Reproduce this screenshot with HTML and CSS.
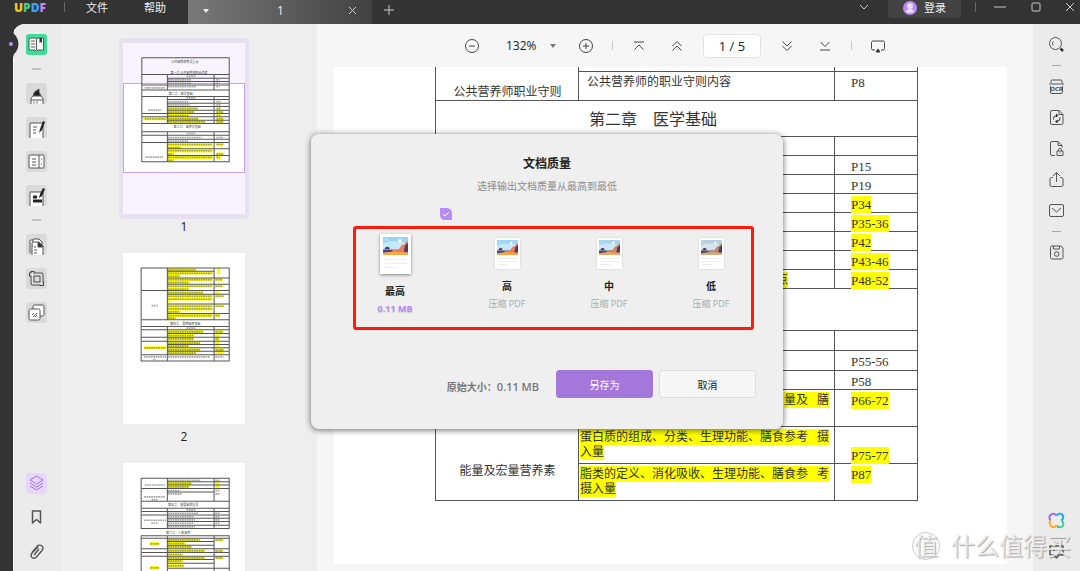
FILE: index.html
```html
<!DOCTYPE html>
<html lang="zh-CN">
<head>
<meta charset="utf-8">
<title>UPDF</title>
<link rel="stylesheet" href="styles.css">
</head>
<body>
<svg class="defs" aria-hidden="true">
  <symbol id="scene" viewBox="0 0 75 54" preserveAspectRatio="none">
    <rect width="75" height="54" fill="#9bd6f8"/>
    <path d="M0 20 Q20 6 75 18V54H0z" fill="#c4e8fb"/>
    <circle cx="51" cy="11" r="5" fill="#fff6dc"/><circle cx="10" cy="8" r="2" fill="#fff"/>
    <path d="M0 38h75v9H0z" fill="#4d3f78"/>
    <path d="M22 47l8-8h16l10-14 8-3 6-8 5-1v34z" fill="#ee7a5a"/>
    <path d="M62 44l4-18 9-9v28z" fill="#51386f"/>
    <path d="M5 37q0-8 8-8t7 8z" fill="#51386f"/>
    <path d="M0 48q35-7 75 0v6H0z" fill="#fba544"/>
  </symbol>
</svg>
<div class="app">
  <header class="titlebar">
    <div class="logo"><span class="u">U</span><span class="p">P</span><span class="d">D</span><span class="f">F</span></div>
    <span class="vline"></span>
    <nav class="menu"><button>文件</button><button>帮助</button></nav>
    <div class="tab">
      <span class="caret light"></span><span class="tab-name">1</span>
      <button class="icon" aria-label="关闭标签"><svg width="9" height="9" viewBox="0 0 9 9"><path d="M1 1l7 7M8 1l-7 7"/></svg></button>
    </div>
    <button class="icon add" aria-label="新标签"><svg width="10" height="10" viewBox="0 0 10 10"><path d="M5 0v10M0 5h10"/></svg></button>
    <div class="window">
      <button class="icon" aria-label="标签列表"><svg width="10" height="8" viewBox="0 0 10 8"><path d="M1 2l4 4 4-4"/></svg></button>
      <button class="login"><svg width="14" height="14" viewBox="0 0 14 14"><circle cx="7" cy="7" r="7" fill="#b98af5"/><circle cx="7" cy="5" r="3" fill="#eadcff"/><path d="M3 11q0-3 4-3t4 3q-4 2-8 0z" fill="#eadcff"/></svg>登录</button>
      <span class="vline"></span>
      <button class="icon" aria-label="最小化"><svg width="12" height="10" viewBox="0 0 12 10"><path d="M0 5h12"/></svg></button>
      <button class="icon" aria-label="最大化"><svg width="10" height="10" viewBox="0 0 10 10"><rect x="1" y="1" width="8" height="8" rx="1"/></svg></button>
      <button class="icon" aria-label="关闭"><svg width="10" height="10" viewBox="0 0 10 10"><path d="M1 1l8 8M9 1l-8 8"/></svg></button>
    </div>
  </header>

  <div class="body">
    <aside class="rail left">
      <svg class="notch" width="14" height="30" viewBox="0 0 14 30"><path d="M0 0h5Q5 5 8 7Q13 15 8 23Q5 25 5 30H0z" fill="#333"/><circle cx="3" cy="15" r="2" fill="#c08cf8"/></svg>
      <button class="tool active" aria-label="阅读器"><svg viewBox="0 0 21 21"><path d="M3 4h6q1.500 0 1.500 1.500Q10.500 4 12 4h5.500v12H12l-1.500 1.200L9 16H3z" fill="#fff"/><path d="M10.500 6v10M5 7h4M5 10h4M5 13h4"/><path d="M13.500 4h2.500v5l-1.250-1L13.500 9z" fill="#333" stroke="none"/></svg></button>
      <hr>
      <button class="tool" aria-label="注释"><svg viewBox="0 0 21 21"><path d="M7 13l1.500-4 4.500-3v3l2 4z" fill="#222"/><path d="M5 21v-6l2-2h8l2 2v6M5 17h12" fill="#fff"/><path d="M8 18v3M11 18v3" stroke="#888"/></svg></button>
      <button class="tool" aria-label="编辑"><svg viewBox="0 0 21 21"><path d="M4 21V6h13v15" fill="#fff"/><path d="M7 10h4M7 13h3M7 16h3"/><path d="M17 4l-3 8-1 4 3-3 3-8z" fill="#222" stroke="none"/></svg></button>
      <button class="tool" aria-label="页面"><svg viewBox="0 0 21 21"><rect x="3" y="4" width="15" height="13" rx="1" fill="#fff"/><path d="M13 4v13M6 8h4M6 11h4M6 14h4M15 8h1M15 13h1"/></svg></button>
      <button class="tool" aria-label="表单"><svg viewBox="0 0 21 21"><path d="M4 21V7h13v14" fill="#fff"/><path d="M7 12h4M7 16h9" stroke-width="3" stroke="#222"/><path d="M17 3l-3 6-1 4 3-2 3-7z" fill="#222" stroke="none"/></svg></button>
      <hr>
      <button class="tool" aria-label="组织页面"><svg viewBox="0 0 21 21"><path d="M4 19V7q0-1 1-1h2M6 21V9q0-1 1-1h6l4 4v9M7 8V6q0-1 1-1h5l3 3v3" fill="#fff"/><path d="M12 8l5 5h-5z" fill="#222"/><path d="M6 12h1M8 13h2M8 16h3M8 19h3"/></svg></button>
      <button class="tool" aria-label="裁剪"><svg viewBox="0 0 21 21"><path d="M3 6.500h12.500V18M6.500 3v12.500H18" stroke-width="4" stroke="#444"/><path d="M4 6.500h11.500V17M6.500 4v11.500H17" stroke-width="2" stroke="#e4e4e4"/></svg></button>
      <button class="tool" aria-label="转换"><svg viewBox="0 0 21 21"><rect x="7" y="3" width="11" height="11" rx="1.500" fill="#fff"/><rect x="3" y="7" width="11" height="11" rx="1.500" fill="#fff"/><path d="M6 13l2-2M7 15l4-4M9 15l2-2"/></svg></button>
      <button class="tool plain layers" aria-label="图层"><svg viewBox="0 0 21 21"><path d="M10.500 3L17 7l-6.500 4L4 7zM4 10l6.500 4 6.500-4M4 13l6.500 4 6.500-4"/></svg></button>
      <button class="tool plain" aria-label="书签"><svg viewBox="0 0 21 21"><path d="M6.500 4h8v12l-4-3.500-4 3.500z" stroke-width="1.500"/></svg></button>
      <button class="tool plain" aria-label="附件"><svg viewBox="0 0 21 21"><path d="M12 6l-6 6q-2 3 0 4.500t4 0l6-7q2-3 0-4.500t-4-.5l-6 7M8 14l5-6" stroke-width="1.400"/></svg></button>
    </aside>

    <section class="thumbs">
      <figure class="thumb selected">
        <div class="frame"><svg viewBox="40 38 363 514" preserveAspectRatio="none">
          <rect x="40" y="38" width="363" height="514" fill="#f8f3fe"/>
          <rect x="41.500" y="160" width="360" height="267" fill="#fff" stroke="#c8a0f8" stroke-width="3"/>
          <g fill="#ff0"><path d="M172 230h90v10h-90zM172 241h80v9h-80zM172 251h65v9h-65zM100 262h165v8H100zM172 271h113v8H172zM318 230h12v9h-12zM318 241h22v9h-22zM318 251h12v9h-12zM318 262h22v17h-22zM172 338h134v11H172zM172 349h42v8h-42zM172 358h134v9H172zM172 367h20v8h-20zM172 377h134v10H172zM172 387h20v8h-20zM318 338h22v10h-22zM318 367h22v9h-22zM318 377h12v10h-12z"/></g>
          <path class="ink" d="M96 82H356V395H96zM96 133H356M172 144H356M172 154H356M96 164H356M96 179H356M96 199H356M172 208H356M172 219H356M172 229H356M172 240H356M96 250H356M96 260H356M172 270H356M96 280H356M96 305H356M96 315H356M172 327H356M96 337H356M172 356H356M172 376H356M172 133V179M311 133V179M172 199V280M311 199V280M172 305V395M311 305V395"/>
          <path class="dots" d="M174 149h70M174 159h70M174 169h82M105 173h60M174 214h60M174 224h65M174 235h88M174 246h78M174 256h62M174 266h90M174 275h110M116 240h38M105 266h62M229 138h26M229 203h26M229 310h26M174 322h100M174 333h60M174 343h130M174 353h36M174 362h130M174 372h16M174 382h130M174 391h16M107 381h52M318 149h9M318 159h9M318 169h9M318 214h14M318 224h14M318 235h12M318 246h20M318 256h12M318 266h20M318 275h20M318 322h20M318 343h20M318 372h20M318 382h10"/>
          <text x="224" y="98">公共营养师考试重点</text><text x="236" y="130">第一章 公共营养师职业道德</text><text x="212" y="193">第二章　医学基础</text><text x="231" y="295">第三章　营养学基础</text>
        </svg></div><figcaption>1</figcaption>
      </figure>
      <figure class="thumb">
        <div class="frame"><svg viewBox="40 25 363 514" preserveAspectRatio="none">
          <rect x="40" y="25" width="363" height="514" fill="#fff"/>
          <path fill="#ff0" d="M172 71h86v9h-86zM172 81h134v9H172zM172 90h38v8h-38zM172 101h134v8H172zM172 109h66v8h-66zM172 121h134v8H172zM172 129h66v8h-66zM172 140h107v9H172zM172 150h134v18H172zM172 168h8v8h-8zM172 180h134v18H172zM172 198h38v7h-38zM172 208h134v10H172zM172 218h26v7h-26zM319 71h10v18h-10zM315 101h22v8h-22zM315 121h24v8h-24zM315 140h12v9h-12zM315 150h26v9h-26zM315 180h26v8h-26zM315 208h14v9h-14zM172 257h107v9H172zM172 268h80v9h-80zM172 279h80v9h-80zM172 291h98v9h-98zM172 301h65v9h-65zM172 311h98v9h-98zM172 321h86v9h-86zM101 305h68v9h-68zM315 257h25v9h-25zM315 268h12v42h-12zM315 311h26v18h-26z"/>
          <path class="ink" d="M94 70H356V350H94zM172 80H311M172 100H356M172 119H356M96 138H356M172 149H356M172 178H356M172 207H356M96 226H356M96 246H356M96 256H356M172 267H356M96 278H356M96 290H356M172 300H356M172 310H356M172 320H356M96 331H356M172 70V226M311 70V226M172 246V350M311 246V350"/>
          <path class="dots" d="M174 76h82M174 86h130M174 95h34M174 105h130M174 114h60M174 125h130M174 134h60M174 144h104M174 155h130M174 164h130M174 185h130M174 193h130M174 202h34M174 213h130M174 221h22M125 183h18M229 251h26M174 262h104M174 273h76M174 283h76M174 296h95M174 305h60M174 316h95M174 326h82M103 310h64M102 337h66M130 345h8M174 337h124M315 105h20M315 125h22M315 155h24M315 185h24M315 213h12M315 262h22M315 283h10M315 316h24M315 337h24"/>
          <text x="225" y="241">第四章　食物营养基础</text>
        </svg></div><figcaption>2</figcaption>
      </figure>
      <figure class="thumb">
        <div class="frame"><svg viewBox="40 656 363 514" preserveAspectRatio="none">
          <rect x="40" y="656" width="363" height="514" fill="#fff"/>
          <path fill="#ff0" d="M172 713h73v9h-73zM172 723h66v9h-66zM315 713h12v19h-12zM172 883h98v9h-98zM172 893h54v9h-54zM172 904h73v9h-73zM172 916h112v9H172zM172 927h46v8h-46zM172 937h112v9H172zM172 947h46v8h-46zM172 960h49v10h-49zM120 894h28v9h-28zM120 966h28v9h-28zM315 883h25v9h-25zM315 916h25v9h-25zM315 937h25v9h-25z"/>
          <path class="ink" d="M94 702H356V853H94zM172 712H356M172 722H356M96 733H356M172 743H311M96 771H356M96 792H356M96 802H356M96 812H356M172 822H356M172 832H356M172 843H356M172 702V771M311 702V771M172 792V853M311 792V853M94 875H356V1150H94zM96 882H356M172 892H311M172 903H311M96 914H356M96 925H356M96 936H356M172 946H311M172 957H311M172 972H356M172 875V1150M311 875V1150"/>
          <path class="dots" d="M174 708h98M174 718h70M174 728h62M174 739h36M174 749h40M105 722h60M103 758h62M125 767h18M229 797h26M174 807h90M174 817h76M174 827h80M174 837h76M174 848h80M102 828h66M124 837h20M174 887h94M174 898h50M174 908h70M174 920h108M174 931h42M174 941h108M174 951h42M174 965h46M121 899h26M121 971h26M315 708h12M315 739h12M315 749h12M315 807h12M315 817h12M315 827h12M315 837h12M315 887h22M315 920h22M315 941h22"/>
          <text x="219" y="786">第五章　膳食营养指导</text><text x="204" y="868">第六章　人群营养</text>
        </svg></div><figcaption>3</figcaption>
      </figure>
    </section>

    <main class="viewer">
      <div class="toolbar">
        <button class="ti" aria-label="缩小"><svg viewBox="0 0 16 16"><circle cx="8" cy="8" r="6.500"/><path d="M5 8h6"/></svg></button>
        <label class="zoom"><select aria-label="缩放"><option>132%</option></select><span class="caret"></span></label>
        <button class="ti" aria-label="放大"><svg viewBox="0 0 16 16"><circle cx="8" cy="8" r="6.500"/><path d="M5 8h6M8 5v6"/></svg></button>
        <span class="bar"></span>
        <button class="ti" aria-label="首页"><svg viewBox="0 0 16 16"><path d="M3 4h10M3.500 11.500L8 7l4.500 4.500"/></svg></button>
        <button class="ti wide" aria-label="上一页"><svg viewBox="0 0 16 16"><path d="M3.500 8L8 3.500 12.500 8M3.500 12.500L8 8l4.500 4.500"/></svg></button>
        <input class="page-no" aria-label="页码" value="1 / 5">
        <button class="ti" aria-label="下一页"><svg viewBox="0 0 16 16"><path d="M3.500 3.500L8 8l4.500-4.500M3.500 8L8 12.500 12.500 8"/></svg></button>
        <button class="ti wide" aria-label="末页"><svg viewBox="0 0 16 16"><path d="M3.500 4L8 8.500 12.500 4M3 12h10"/></svg></button>
        <span class="bar"></span>
        <button class="ti" aria-label="演示"><svg viewBox="0 0 16 16"><path d="M5 12H3q-1.500 0-1.500-1.500v-6Q1.500 3 3 3h10q1.500 0 1.500 1.500v6Q14.500 12 13 12h-2"/><path d="M8 11l2 3H6z" fill="#222"/></svg></button>
      </div>
      <div class="sheet">
        <table>
          <colgroup><col class="c1"><col class="c2"><col class="c3"></colgroup>
          <tr class="h20"><td rowspan="2" class="topic low">公共营养师职业守则</td><td class="in">职业道德的作用和要素</td><td class="pg">P6</td></tr>
          <tr class="h29"><td class="in">公共营养师的职业守则内容</td><td class="pg">P8</td></tr>
          <tr class="h36"><td colspan="3" class="chapter">第二章　医学基础</td></tr>
          <tr class="h19"><td></td><td></td><td></td></tr>
          <tr class="h19"><td></td><td></td><td class="pg">P15</td></tr>
          <tr class="h19"><td></td><td></td><td class="pg">P19</td></tr>
          <tr class="h19"><td></td><td></td><td class="pg"><mark>P34</mark></td></tr>
          <tr class="h19"><td></td><td></td><td class="pg"><mark>P35-36</mark></td></tr>
          <tr class="h19"><td></td><td></td><td class="pg"><mark>P42</mark></td></tr>
          <tr class="h19"><td></td><td></td><td class="pg"><mark>P43-46</mark></td></tr>
          <tr class="h19"><td></td><td class="tail short-line"><mark>点</mark></td><td class="pg"><mark>P48-52</mark></td></tr>
          <tr class="h42"><td colspan="3"></td></tr>
          <tr class="h20"><td></td><td></td><td></td></tr>
          <tr class="h20"><td></td><td></td><td class="pg">P55-56</td></tr>
          <tr class="h19"><td></td><td></td><td class="pg">P58</td></tr>
          <tr class="h37"><td></td><td class="tail"><mark>量及&nbsp; &nbsp;膳</mark></td><td class="pg"><mark>P66-72</mark></td></tr>
          <tr class="h37"><td rowspan="2" class="topic">能量及宏量营养素</td><td><mark>蛋白质的组成、分类、生理功能、膳食参考&nbsp; &nbsp;摄<br>入量</mark></td><td class="pg low"><mark>P75-77</mark></td></tr>
          <tr class="h37"><td><mark>脂类的定义、消化吸收、生理功能、膳食参&nbsp; &nbsp;考<br>摄入量</mark></td><td class="pg"><mark>P87</mark></td></tr>
        </table>
      </div>
    </main>

    <aside class="rail right">
      <button class="side" aria-label="搜索"><svg viewBox="0 0 17 17"><circle cx="7.500" cy="7.500" r="6"/><path d="M5 5.500q-1 2 0 4"/><path d="M12.500 12.500l2.500 2.500" stroke-width="2.500" stroke="#333"/></svg></button>
      <hr>
      <button class="side" aria-label="OCR"><svg viewBox="0 0 17 17"><path d="M3 5V3q0-1 1-1h9q1 0 1 1v2M1 6h15M2.500 8v6q0 1.500 1.500 1.500h9q1.500 0 1.500-1.500V8"/><text x="8.500" y="13">OCR</text></svg></button>
      <button class="side" aria-label="转换"><svg viewBox="0 0 17 17"><path d="M4 1.500h7l4 4v8.500q0 1.500-1.500 1.500H4Q2.500 15.500 2.500 14V3Q2.500 1.500 4 1.500zM11 1.500v4h4"/><path d="M5.500 10.500q-.5-3.500 3-4M12 8.500q.5 3.500-3 4" stroke="#333"/><path d="M8 4.500l2.500 2L8 8.500zM9.500 10.500l-2.500 2 2.500 2z" fill="#333" stroke="none"/></svg></button>
      <button class="side" aria-label="保护"><svg viewBox="0 0 17 17"><path d="M7 15.500H4Q2.500 15.500 2.500 14V3Q2.500 1.500 4 1.500h6l4 4v2M10 1.500v4h4M9 11h6v4.500H9zM10.500 11V9.500q0-1 1.500-1t1.500 1V11M12 12.500v1"/></svg></button>
      <button class="side" aria-label="分享"><svg viewBox="0 0 17 17"><path d="M5 6.500H3.500Q2 6.500 2 8v6q0 1.500 1.500 1.500h10q1.500 0 1.500-1.500V8q0-1.500-1.500-1.500H12M8.500 11V1.500M5 5l3.500-3.500L12 5"/></svg></button>
      <button class="side" aria-label="邮件"><svg viewBox="0 0 17 17"><rect x="1.500" y="2.500" width="14" height="12" rx="1.500"/><path d="M4 6l4.500 4L13 6"/></svg></button>
      <hr>
      <button class="side" aria-label="保存"><svg viewBox="0 0 17 17"><path d="M4 2h9l2 2v9.500Q15 15 13.500 15H4q-1.500 0-1.500-1.500v-10Q2.500 2 4 2zM5.500 2v3h6V2"/><circle cx="8.750" cy="10" r="2.300"/></svg></button>
      <button class="side last" aria-label="AI 助手"><svg viewBox="0 0 17 17" stroke-width="2"><path d="M2.500 8.500Q0 5 3 2.500 6 .5 8.500 3.500" stroke="#a06cf5"/><path d="M8.500 3.500Q12 0 14.500 3q2 2.500-1 5.500" stroke="#22a8f0"/><path d="M13.500 8.500q3.500 3.500.5 6-3 2-5.500-1" stroke="#35cf96"/><path d="M8.500 13.500q-3 3-5.500.5-2.500-2.500-.5-5.500" stroke="#fcae22"/></svg></button>
      <button class="side" aria-label="反馈"><svg viewBox="0 0 17 17"><path d="M2 3h13v9h-4l-2.500 3L6 12H2zM5 7h2M10 7h2" stroke-width="1.500"/></svg></button>
    </aside>
  </div>

  <div class="overlay">
    <form class="dialog" role="dialog" aria-labelledby="dt">
      <h1 id="dt">文档质量</h1>
      <p class="hint">选择输出文档质量从最高到最低</p>
      <fieldset class="options">
        <label class="opt best"><input type="radio" name="q" checked><span class="pic"><svg class="scene"><use href="#scene"/></svg><i></i><i></i><i class="short"></i></span><b>最高</b><small>0.11 MB</small>
          <svg class="check" width="12" height="12" viewBox="0 0 12 12"><path d="M0 0h7q5 0 5 6v6H5q-5 0-5-6z" fill="#b98af8"/><path d="M3 6l2 2 4-4" fill="none" stroke="#fff"/></svg></label>
        <label class="opt"><input type="radio" name="q"><span class="pic"><svg class="scene"><use href="#scene"/></svg><i></i><i></i><i class="short"></i></span><b>高</b><small>压缩 PDF</small></label>
        <label class="opt medium"><input type="radio" name="q"><span class="pic"><svg class="scene"><use href="#scene"/></svg><i></i><i></i><i class="short"></i></span><b>中</b><small>压缩 PDF</small></label>
        <label class="opt lowest"><input type="radio" name="q"><span class="pic"><svg class="scene"><use href="#scene"/></svg><i></i><i></i><i class="short"></i></span><b>低</b><small>压缩 PDF</small></label>
      </fieldset>
      <div class="actions"><span class="size">原始大小：<span class="num">0.11 MB</span></span><button type="button" class="btn primary">另存为</button><button type="button" class="btn">取消</button></div>
    </form>
  </div>
  <div class="watermark"><span class="seal">值</span><span>什么值得买</span></div>
</div>
</body>
</html>
```
FILE: styles.css
```css
* { box-sizing: border-box; }
body {
  margin: 0;
  background: #333;
  color: #222;
  font: 11px "Open Sans", "Noto Sans CJK SC", sans-serif;
}
button, input, select { font: inherit; color: inherit; border: 0; background: none; padding: 0; margin: 0; }
button { display: inline-flex; align-items: center; justify-content: center; cursor: pointer; }
svg { fill: none; stroke-linejoin: round; display: block; }
hr { border: 0; margin: 0; }
.defs { position: absolute; width: 0; height: 0; }
.app { position: relative; height: 100vh; display: flex; flex-direction: column; overflow: hidden; }

.titlebar { flex: none; height: 24px; display: flex; align-items: flex-start; color: #eee; line-height: 16px; }
.titlebar svg { stroke: #ccc; }
.logo { width: 50px; padding-left: 14px; font: 800 12px/16px "Open Sans", sans-serif; white-space: nowrap; }
.u { color: #fcc419; } .p { color: #38d08c; } .d { color: #3aa2f5; } .f { color: #c084f5; }
.vline { width: 1px; height: 10px; margin-top: 2px; background: #666; }
.logo + .vline { margin-left: 14px; }
.menu { display: flex; gap: 36px; padding: 0 22px 0 21px; }
.menu button { height: 16px; }
.tab { width: 184px; height: 24px; padding: 0 15px 3px; display: flex; align-items: center; justify-content: space-between; background: linear-gradient(90deg, #797979, #424242); }
.tab-name { font-size: 12px; padding-left: 4px; }
.caret { border: 3px solid transparent; border-top: 4px solid #777; border-bottom: 0; }
.caret.light { border-top-color: #eee; }
.add { margin: 5px 0 0 12px; }
.window { margin-left: auto; display: flex; align-items: flex-start; padding-right: 5px; }
.window > .icon { height: 14px; }
.login { height: 18px; width: 73px; gap: 7px; margin: 0 14px 0 19px; padding-bottom: 3px; background: #434343; border-radius: 0 0 3px 3px; }
.login svg { stroke: none; }
.window .vline + .icon { margin: 0 25px 0 18px; }
.window .icon:last-child { margin-left: 24px; }

.body { flex: 1; min-height: 0; margin-left: 13px; display: flex; border-radius: 12px 12px 0 0; overflow: clip; overflow-clip-margin: 14px; background: #eee; }
.rail { flex: none; display: flex; flex-direction: column; align-items: center; background: #ebebeb; }
.rail hr { width: 9px; height: 2px; background: #c2c2c2; flex: none; }
.left { position: relative; width: 47px; padding: 10px 0 9px; gap: 13px; border-left: 1px solid #fff; border-right: 1px solid #e6e6e6; border-top-left-radius: 12px; }
.notch { position: absolute; left: -6px; top: 5px; }
.tool { flex: none; width: 21px; height: 21px; border-radius: 3px; background: #dadada; overflow: hidden; }
.tool svg { width: 21px; height: 21px; stroke: #555; }
.tool.active { background: #3ddc97; }
.tool.plain { background: none; }
.tool.layers { margin-top: auto; background: #e6d8fd; }
.tool.layers svg { stroke: #a46df0; }

.thumbs { flex: none; width: 257px; padding: 14px 0 0 59px; overflow: hidden; display: flex; flex-direction: column; gap: 14px; background: #eee; }
.thumb { flex: none; width: 130px; margin: 0; text-align: center; }
.frame { padding: 5px 4px; border-radius: 4px; }
.selected .frame { background: #e7e1ef; }
.frame svg { width: 100%; height: 171px; }
figcaption { height: 15px; font-size: 12px; line-height: 15px; }
.ink { stroke: #555; stroke-width: 3; }
.dots { stroke: #666; stroke-opacity: .6; stroke-width: 5; stroke-dasharray: 5 2; }
.frame text { fill: #444; font-size: 9px; text-anchor: middle; }

.viewer { flex: 1; min-width: 0; display: flex; flex-direction: column; background: #f6f6f6; padding-bottom: 7px; }
.toolbar { flex: none; height: 43px; display: flex; align-items: center; justify-content: center; gap: 18px; }
.ti { width: 16px; height: 16px; }
.ti svg { width: 16px; height: 16px; stroke: #444; }
.ti.wide { margin: 0 0 0 4px; }
.zoom { display: flex; align-items: center; gap: 12px; margin: 0 4px 0 8px; font-size: 12px; }
.zoom select { appearance: none; width: 32px; }
.bar { width: 1px; height: 9px; background: #ccc; }
.page-no { width: 58px; height: 24px; background: #fff; border: 1px solid #e2e2e2; border-radius: 4px; text-align: center; font-size: 13px; word-spacing: normal; }
.sheet { flex: 1; min-height: 0; margin: 0 26px 0 17px; overflow: hidden; background: #fff; }
.sheet table { width: 483px; margin: -16px auto 0; border-collapse: collapse; table-layout: fixed; font: 12px/15px "Liberation Serif", "Noto Sans CJK SC", serif; color: #333; position: relative; }
.sheet { padding-left: 12px; }
.c1 { width: 143px; } .c2 { width: 256px; } .c3 { width: 83px; }
.sheet td { border: 1px solid #555; padding: 3px 0 0 1px; vertical-align: top; white-space: nowrap; }
.sheet td.in { padding-left: 8px; }
.sheet td.pg { padding-left: 16px; font-size: 13px; }
.sheet td.tail { text-align: right; padding-right: 5px; }
.sheet td.short-line { padding-right: 46px; }
.sheet td.low { vertical-align: bottom; }
.sheet td.topic { text-align: center; }
.sheet td.topic:not(.low) { vertical-align: middle; padding-top: 16px; }
.sheet td.chapter { vertical-align: middle; text-align: center; padding-right: 48px; font-size: 16px; line-height: 20px; }
mark { background: #ff0; color: inherit; padding: 1px 0; }
.h19 { height: 19px; } .h20 { height: 20px; } .h29 { height: 29px; } .h36 { height: 36px; } .h37 { height: 37px; } .h42 { height: 42px; }

.right { width: 47px; padding: 12px 0 11px; gap: 14px; }
.right hr { height: 1px; margin: -2px 0; background: #aaa; }
.side { flex: none; width: 17px; height: 17px; }
.side svg { width: 17px; height: 17px; stroke: #555; }
.side text { font: 700 6px "Open Sans", sans-serif; text-anchor: middle; fill: #444; stroke: none; }
.side.last { margin-top: auto; }

.overlay { position: absolute; inset: 0; display: grid; place-items: center; padding: 0 0 8px 14px; }
.dialog { width: 472px; padding: 20px 27px 31px 42px; background: #efefef; border-radius: 8px; box-shadow: 0 1px 6px rgba(0, 0, 0, .6); }
.dialog h1 { margin: 0 15px 0 0; font-size: 12px; line-height: 20px; text-align: center; }
.hint { margin: 4px 15px 32px 0; font-size: 10px; line-height: 16px; text-align: center; color: #8c8c8c; }
.options { width: 401px; height: 104px; margin: 0; padding: 5px 0 0; border: 3px solid #ff1a0e; border-radius: 3px; display: flex; gap: 24px; }
.opt { position: relative; width: 78px; display: flex; flex-direction: column; align-items: center; padding-top: 4px; }
.opt input { position: absolute; opacity: 0; width: 1px; height: 1px; }
.opt b { margin-top: 9px; font-size: 10px; line-height: 16px; }
.opt small { margin-top: 3px; font-size: 9px; line-height: 14px; color: #aaa; }
.pic { width: 25px; height: 31px; padding: 2px; background: #fff; box-shadow: 0 0 2px rgba(0, 0, 0, .15); display: flex; flex-direction: column; gap: 2px; }
.scene { width: 100%; height: 15px; margin-bottom: 1px; }
.pic i { height: 1px; margin: 0 1px; background: #ececec; }
.pic i.short { width: 50%; }
.best { margin-right: 10px; padding-top: 0; }
.best .pic { width: 31px; height: 40px; padding: 3px; gap: 3px; box-shadow: 0 1px 3px rgba(0, 0, 0, .45); }
.best .scene { height: 18px; }
.best small { font-weight: 700; color: #b98af8; text-shadow: 0 1px 1px rgba(0, 0, 0, .15); }
.medium .scene { filter: saturate(.75); }
.lowest .scene { filter: saturate(.45); }
.check { position: absolute; left: 84px; top: -26px; }
.actions { display: flex; align-items: center; margin-top: 40px; }
.size { flex: 1; text-align: right; margin-right: 17px; padding-top: 4px; font-size: 10px; font-weight: 600; color: #777; white-space: nowrap; }
.num { font-size: 11px; }
.btn { width: 97px; height: 28px; border: 1px solid #ddd; border-radius: 3px; background: #f6f6f6; font-size: 10px; }
.primary { margin-right: 6px; border-color: #a478da; background: #a478da; color: #fff; }

.watermark { position: absolute; right: 9px; bottom: 9px; display: flex; align-items: center; gap: 11px; font-size: 24px; line-height: 32px; color: rgba(238, 238, 238, .9); text-shadow: 1px 1px 1px rgba(110, 110, 110, .6); pointer-events: none; }
.seal { width: 28px; height: 28px; line-height: 25px; text-align: center; border: 1px solid #ccc; border-radius: 50%; }
```
